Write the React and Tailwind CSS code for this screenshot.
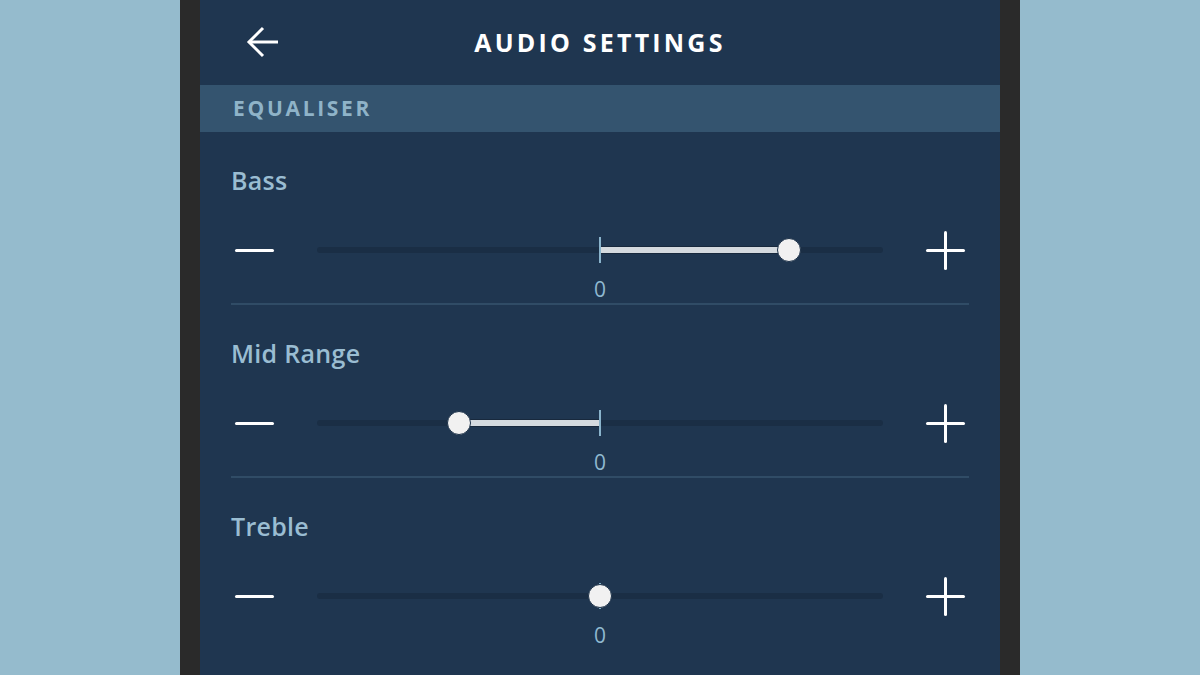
import React from "react"

const bands = [
  { name: "Bass", value: 4 },
  { name: "Mid Range", value: -3 },
  { name: "Treble", value: 0 },
]

// range is -6..6, zero sits in the middle of the track
function EqSlider({ value }) {
  const pct = ((value + 6) / 12) * 100
  const left = Math.min(pct, 50)
  const width = Math.abs(pct - 50)
  return (
    <div className="relative flex-1 h-[40px]">
      <div className="absolute left-0 right-0 top-[17px] h-[6px] bg-[#1a2e45] rounded-full" />
      {width > 0 && (
        <div
          className="absolute top-[16px] h-[8px] bg-[#d4dadf] border border-[#18293d]"
          style={{ left: `${left}%`, width: `${width}%` }}
        />
      )}
      <div className="absolute left-1/2 top-[7px] w-[2px] h-[26px] -ml-[1px] bg-[#8ab4cc]" />
      <div
        className="absolute top-[8px] w-[24px] h-[24px] -ml-[12px] rounded-full bg-[#f1f1f1] border border-[#1d3249]"
        style={{ left: `${pct}%` }}
      />
    </div>
  )
}

function Band({ name, value, last }) {
  return (
    <div className={last ? "" : "border-b-2 border-[#304c66]"}>
      <div className="pt-[32px] h-[65px] text-[25px] font-semibold tracking-[0.3px] leading-[32px] text-[#9abdd2]">{name}</div>
      <div className="mt-[33px] flex items-center h-[40px]">
        <div className="w-[47px] flex justify-center">
          <div className="w-[39px] h-[3px] rounded-full bg-white" />
        </div>
        <div className="flex-1 flex px-[39px]">
          <EqSlider value={value} />
        </div>
        <div className="w-[47px] flex justify-center">
          <div className="relative w-[39px] h-[39px]">
            <div className="absolute left-0 right-0 top-[18px] h-[3px] rounded-full bg-white" />
            <div className="absolute top-0 bottom-0 left-[18px] w-[3px] rounded-full bg-white" />
          </div>
        </div>
      </div>
      <div className="mt-[7px] h-[24px] flex">
        <div className="w-[47px]" />
        <div className="flex-1 px-[39px] text-center text-[21px] leading-[24px] text-[#8fb8d0]">0</div>
        <div className="w-[47px]" />
      </div>
      <div className="h-[2px]" />
    </div>
  )
}

export default function App() {
  return (
    <div className="w-[1200px] h-[675px] flex bg-[#95bbcd] overflow-hidden" style={{ fontFamily: '"Open Sans", "Noto Sans", sans-serif' }}>
      <div className="w-[180px]" />
      <div className="w-[840px] px-[20px] bg-[#2a2a2a]">
        <div className="h-full bg-[#1f3650] flex flex-col">
          {/* header */}
          <div className="relative h-[85px] flex items-center justify-center">
            <svg className="absolute left-[46px] top-[26px] w-[32px] h-[32px]" viewBox="0 0 32 32" fill="none" stroke="white" strokeWidth="3" strokeLinecap="butt" strokeLinejoin="miter">
              <path d="M32 16H3" />
              <path d="M17 2L3 16l14 14" />
            </svg>
            <h1 className="text-white text-[25px] font-bold tracking-[3.2px] leading-none">AUDIO SETTINGS</h1>
          </div>
          {/* section band */}
          <div className="h-[47px] bg-[#34546f] flex items-center pl-[33px]">
            <span className="text-[#8fb3c8] text-[21px] font-bold tracking-[2.7px] leading-none">EQUALISER</span>
          </div>
          <div className="px-[31px]">
            {bands.map((b, i) => (
              <Band key={b.name} {...b} last={i === bands.length - 1} />
            ))}
          </div>
        </div>
      </div>
      <div className="w-[180px]" />
    </div>
  )
}
